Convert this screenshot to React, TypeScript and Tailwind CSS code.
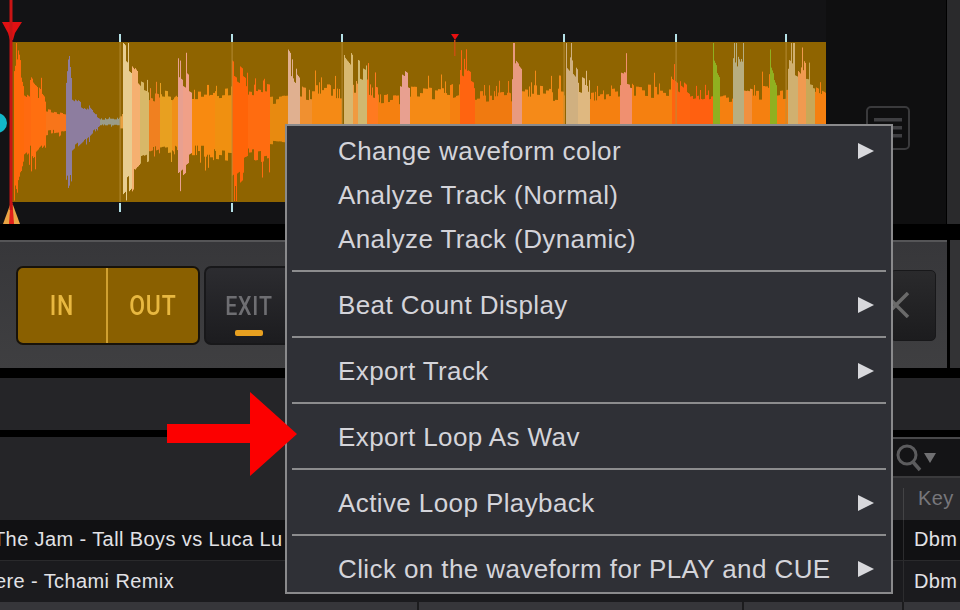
import React from "react";

type Seg = [number, number, string, number, number];
const segs: Seg[] = [
  [14, 19, "#ff6a0a", 60, 78],
  [19, 24, "#ff6a0a", 70, 42],
  [24, 31, "#ff6a10", 32, 26],
  [31, 46, "#ff6f10", 40, 22],
  [46, 66, "#f8751a", 12, 8],
  [66, 69, "#8d7d9f", 40, 76],
  [69, 72, "#8d7d9f", 76, 38],
  [72, 100, "#8d7d9f", 30, 3],
  [100, 120, "#9a9c88", 3, 3],
  [120, 123, "#e8a040", 6, 6],
  [123, 132, "#e8cd90", 72, 62],
  [132, 140, "#f5b070", 56, 45],
  [140, 149, "#d8b868", 45, 40],
  [149, 160, "#f08020", 30, 26],
  [160, 172, "#e8a020", 30, 28],
  [172, 178, "#f09018", 28, 34],
  [178, 183, "#e8a090", 60, 55],
  [183, 192, "#f0a088", 50, 42],
  [192, 215, "#f88a10", 32, 32],
  [215, 232, "#f09010", 34, 36],
  [232, 248, "#ff6408", 62, 48],
  [248, 270, "#ff6c10", 38, 34],
  [270, 288, "#e88a10", 24, 26],
  [288, 300, "#e0b090", 66, 48],
  [300, 312, "#f09030", 32, 30],
  [312, 342, "#f58a15", 34, 34],
  [344, 353, "#d8b870", 74, 60],
  [353, 358, "#f09a40", 34, 34],
  [358, 367, "#d0b870", 55, 50],
  [367, 378, "#ff7a20", 38, 34],
  [378, 400, "#f58010", 24, 26],
  [400, 410, "#e8a090", 52, 45],
  [410, 450, "#f58a15", 34, 30],
  [450, 460, "#f58010", 34, 38],
  [460, 475, "#ff6410", 52, 42],
  [475, 512, "#f07a10", 28, 30],
  [512, 522, "#e89a80", 62, 50],
  [522, 565, "#f58a18", 34, 30],
  [566, 578, "#d0b080", 74, 55],
  [578, 590, "#dfb880", 42, 36],
  [590, 620, "#f58010", 28, 32],
  [620, 632, "#f09070", 46, 42],
  [632, 672, "#f58010", 34, 32],
  [672, 690, "#ff6410", 48, 32],
  [690, 713, "#ff6010", 24, 30],
  [713, 720, "#90b020", 66, 50],
  [720, 733, "#f58010", 26, 28],
  [733, 744, "#b8ae80", 76, 50],
  [744, 752, "#f09040", 34, 32],
  [752, 770, "#f58010", 32, 32],
  [770, 777, "#90b020", 68, 45],
  [777, 788, "#f58010", 32, 34],
  [788, 798, "#d0b070", 56, 50],
  [798, 806, "#f09a50", 74, 60],
  [806, 815, "#c8a858", 45, 42],
  [815, 826, "#f58010", 38, 32],
];

function rnd(i: number): number {
  const v = Math.sin(i * 12.9898) * 43758.5453;
  return v - Math.floor(v);
}

const bars: { x: number; t: number; b: number; c: string }[] = [];
segs.forEach(([x0, x1, c, a0, a1]) => {
  for (let x = x0; x < x1; x++) {
    const f = (x - x0) / Math.max(1, x1 - x0);
    const a = a0 + (a1 - a0) * f;
    const lumpT = rnd(Math.floor(x / 3));
    const lumpB = rnd(Math.floor(x / 3) + 300);
    const spikeT = rnd(x) > 0.88 ? 1.4 : 1;
    const spikeB = rnd(x + 500) > 0.88 ? 1.4 : 1;
    const t = a * (0.68 + 0.45 * lumpT) * spikeT;
    const b = a * (0.68 + 0.45 * lumpB) * spikeB;
    bars.push({ x, t: Math.min(79, t), b: Math.min(79, b), c });
  }
});

const ticks = [120, 232, 342, 564, 676, 786];

function Waveform() {
  return (
    <svg width="946" height="224" viewBox="0 0 946 224" className="block">
      <rect x="826" y="0" width="120" height="224" fill="#0f0f10" />
      <rect x="12" y="42" width="814" height="160" fill="#8f6400" />
      <g className="blur-[0.4px]">
        {bars.map((b) => (
          <rect key={b.x} x={b.x} y={122 - b.t} width="1" height={b.t + b.b} fill={b.c} />
        ))}
      </g>
      {ticks.map((x) => (
        <g key={x}>
          <rect x={x - 0.5} y="42" width="1.2" height="160" fill="#b8903a" opacity="0.75" />
          <rect x={x - 1} y="34" width="2" height="8" fill="#b4e0e6" />
          <rect x={x - 1} y="203" width="2" height="9" fill="#b4e0e6" />
        </g>
      ))}
      <path d="M451 34h8l-4 6z" fill="#e81010" />
      <rect x="454" y="40" width="1.500" height="16" fill="#c85010" />
      <path d="M2 22h20l-7 11-2 7h-3l-2-7z" fill="#e01012" />
      <circle cx="-3" cy="123" r="10" fill="#12b8c8" />
      <path d="M10 205h3l7 19H3z" fill="#eaa545" />
      <path d="M10.500 203h2l1.500 21h-5z" fill="#e0201a" />
      <rect x="9.500" y="0" width="3" height="210" fill="#c81414" />
      <rect x="867" y="107" width="42" height="42" rx="4" fill="none" stroke="#3a3a3c" strokeWidth="2" />
      <rect x="874" y="118" width="28" height="3.500" fill="#3f3f42" />
      <rect x="874" y="126" width="28" height="3.500" fill="#3f3f42" />
      <rect x="874" y="134" width="28" height="3.500" fill="#3f3f42" />
    </svg>
  );
}

function Chevron() {
  return (
    <svg width="18" height="18" viewBox="0 0 18 18" className="shrink-0">
      <path d="M1 1l16 8-16 8z" fill="#d8d8dc" />
    </svg>
  );
}

function Row({ label, sub }: { label: string; sub?: boolean }) {
  return (
    <div className="h-11 flex items-center justify-between pl-[51px] pr-[16px]">
      <span className="whitespace-nowrap">{label}</span>
      {sub && <Chevron />}
    </div>
  );
}

function Sep() {
  return <div className="h-[2px] mx-[5px] mt-[9px] mb-[11px] bg-[#8c8c8e]" />;
}

function Menu() {
  return (
    <div className="absolute left-[285px] top-[124px] w-[608px] h-[470px] border-2 border-[#8a8a8c] bg-[#2f3036] pt-[3px] text-[26px] tracking-[0.4px] leading-none text-[#d4d4da] font-['Liberation_Sans',sans-serif]">
      <Row label="Change waveform color" sub />
      <Row label="Analyze Track (Normal)" />
      <Row label="Analyze Track (Dynamic)" />
      <Sep />
      <Row label="Beat Count Display" sub />
      <Sep />
      <Row label="Export Track" sub />
      <Sep />
      <Row label="Export Loop As Wav" />
      <Sep />
      <Row label="Active Loop Playback" sub />
      <Sep />
      <Row label="Click on the waveform for PLAY and CUE" sub />
    </div>
  );
}

function LoopLabel({ text, cls }: { text: string; cls: string }) {
  return (
    <span className={`inline-block scale-x-[0.82] leading-none font-medium tracking-[1px] font-['Roboto',sans-serif] ${cls}`}>
      {text}
    </span>
  );
}

function Controls() {
  return (
    <div className="h-[128px] flex items-stretch bg-[#3a3a3c]">
      <div className="w-[947px] border-t-2 border-[#555557] bg-gradient-to-b from-[#37373a] to-[#3f3f41] flex items-center pl-[16px] pr-[11px] gap-[4px]">
        <div className="w-[184px] h-[79px] flex rounded-[7px] border-2 border-[#18130a] bg-[#8a6000] overflow-hidden">
          <div className="w-[90px] flex items-center justify-center border-r-2 border-[#d0a030]">
            <LoopLabel text="IN" cls="text-[#e8b840] text-[28px] pt-[2px]" />
          </div>
          <div className="flex-1 flex items-center justify-center">
            <LoopLabel text="OUT" cls="text-[#e8b840] text-[28px] pt-[2px]" />
          </div>
        </div>
        <div className="w-[90px] h-[79px] rounded-[7px] border-2 border-[#18181a] bg-gradient-to-b from-[#2c2c30] to-[#1c1c1f] flex flex-col items-center pt-[25px]">
          <LoopLabel text="EXIT" cls="text-[#6e6e72] text-[26px]" />
          <div className="w-[28px] h-[6px] mt-[11px] rounded-[2px] bg-[#e8a020]" />
        </div>
        <div className="ml-auto w-[46px] h-[71px] rounded-[5px] border border-[#18181a] bg-gradient-to-b from-[#2a2a2c] to-[#1c1c1e] flex items-center justify-end pr-[25px]">
          <svg width="28" height="26" viewBox="0 0 28 26" className="shrink-0">
            <path d="M2 1l24 24M26 1L2 25" stroke="#6a6a6a" strokeWidth="3.500" fill="none" />
          </svg>
        </div>
      </div>
      <div className="w-[3px] bg-black" />
      <div className="flex-1 bg-[#333335]" />
    </div>
  );
}

function Library() {
  return (
    <div className="font-['Liberation_Sans',sans-serif] tracking-[0.4px]">
      <div className="h-[52px] bg-[#252528]" />
      <div className="h-[7px] bg-black" />
      <div className="flex h-[83px]">
        <div className="w-[880px] bg-[#252528]" />
        <div className="flex-1 flex flex-col">
          <div className="h-[2px] bg-[#48484a]" />
          <div className="h-[37px] bg-[#141416] pl-[16px] flex items-center gap-[1px]">
            <svg width="26" height="30" viewBox="0 0 26 30">
              <circle cx="11" cy="12" r="9" fill="none" stroke="#5c5c5e" strokeWidth="3" />
              <path d="M17 19l7 8" stroke="#5c5c5e" strokeWidth="3.500" fill="none" />
            </svg>
            <svg width="14" height="10" viewBox="0 0 14 10">
              <path d="M1 0h12L7 10z" fill="#707072" />
            </svg>
          </div>
          <div className="h-[2px] bg-[#3a3a3c]" />
          <div className="h-[42px] bg-[#2a2a2d] pl-[23px] flex">
            <div className="w-px mt-[10px] bg-[#434345]" />
            <span className="pl-[14px] text-[20px] leading-[40px] text-[#77777b]">Key</span>
          </div>
        </div>
      </div>
      <div className="h-[40px] bg-[#111113] flex items-center text-[20px] text-[#e2e2e6] overflow-hidden pb-[2px]">
        <span className="ml-[-7px] w-[910px] whitespace-nowrap">The Jam - Tall Boys vs Luca Lu</span>
        <span className="w-px h-[42px] bg-[#2c2c2e]" />
        <span className="pl-[10px]">Dbm</span>
      </div>
      <div className="h-px bg-[#2a2a2c]" />
      <div className="h-[41px] bg-[#1b1b1e] flex items-center text-[20px] text-[#e2e2e6] overflow-hidden pb-[2px]">
        <span className="ml-[-5px] w-[908px] whitespace-nowrap">ere - Tchami Remix</span>
        <span className="w-px h-[43px] bg-[#2c2c2e]" />
        <span className="pl-[10px]">Dbm</span>
      </div>
      <div className="h-[9px] bg-[#36363a] flex">
        <div className="w-[419px] border-r-2 border-[#1c1c1e]" />
        <div className="w-[325px] border-r-2 border-[#1c1c1e]" />
        <div className="w-[160px] border-r-2 border-[#1c1c1e]" />
      </div>
    </div>
  );
}

export default function App() {
  return (
    <div className="relative w-[960px] h-[610px] overflow-hidden bg-black">
      <div className="h-[224px] flex bg-[#131315]">
        <Waveform />
        <div className="w-[1px] bg-black" />
        <div className="flex-1 bg-[#2a2a2c]" />
      </div>
      <div className="h-[16px] bg-black" />
      <Controls />
      <div className="h-[10px] bg-black" />
      <Library />
      <Menu />
      <svg width="132" height="86" viewBox="0 0 132 86" className="absolute left-[166px] top-[391px]">
        <path d="M1 33h83V1l47 42-47 42V52H1z" fill="#fc0000" />
      </svg>
    </div>
  );
}
